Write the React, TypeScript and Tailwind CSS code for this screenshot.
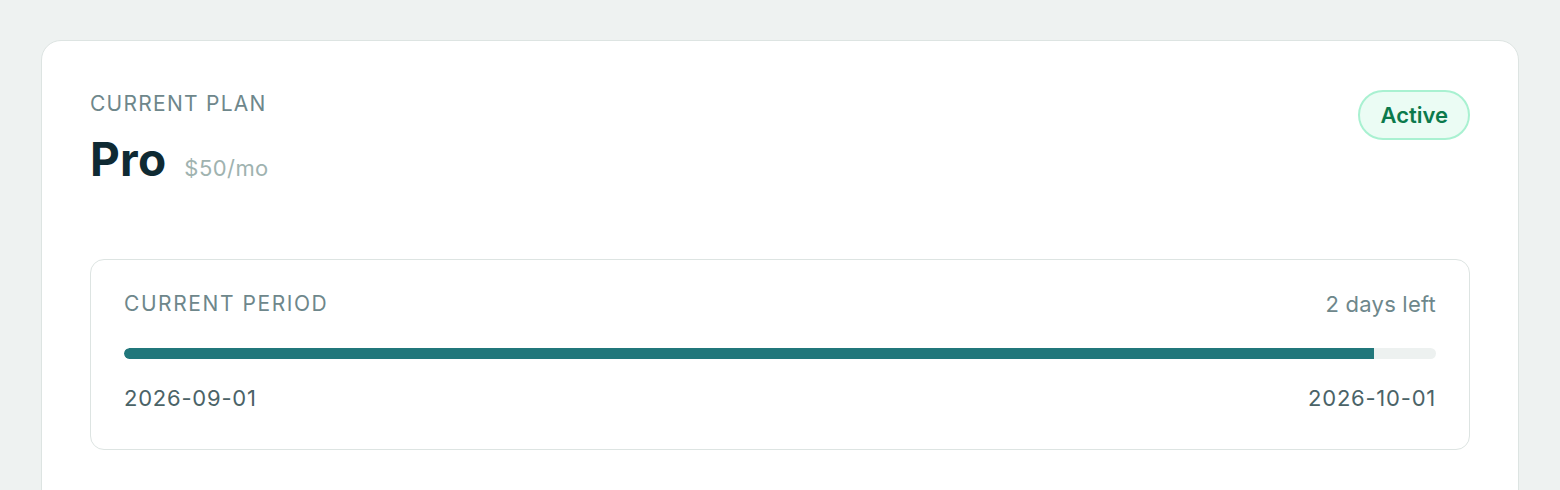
const FONT = "font-['Inter','Noto_Sans',sans-serif]"

function PeriodBox({ start, end, left, pct }: { start: string; end: string; left: string; pct: number }) {
  return (
    <div className="rounded-[14px] border border-[#dde4e2] px-[33px] pt-[31px] pb-[37px]">
      <div className="flex items-center justify-between">
        <span className="text-[21px] leading-[26px] tracking-[0.075em] text-[#6e878b]">CURRENT PERIOD</span>
        <span className="text-[22px] leading-[26px] tracking-[0.01em] text-[#6e878b]">{left}</span>
      </div>
      <div className="mt-[31px] h-[11px] w-full rounded-full bg-[#edf1f0] overflow-hidden">
        <div className="h-full rounded-l-full bg-[#21777b]" style={{ width: `${pct}%` }} />
      </div>
      <div className="mt-[25px] flex items-center justify-between text-[22px] leading-[28px] tracking-[0.035em] text-[#4b6367]">
        <span>{start}</span>
        <span>{end}</span>
      </div>
    </div>
  )
}

export default function App() {
  return (
    <div className={`${FONT} h-[490px] overflow-hidden bg-[#eef2f1] px-[41px] pt-[40px]`}>
      <div className="rounded-[20px] border border-[#dde4e2] bg-white px-12 pt-12 pb-24">
        <div className="flex items-start justify-between">
          <div>
            <div className="text-[21px] leading-[30px] tracking-[0.06em] text-[#6e878b]">CURRENT PLAN</div>
            <div className="mt-[16px] flex items-baseline gap-[18px]">
              <span className="text-[46px] leading-[48px] font-bold tracking-[0.005em] text-[#0f2a33]">Pro</span>
              <span className="text-[22px] tracking-[0.02em] text-[#9fb3b0]">$50/mo</span>
            </div>
          </div>
          <div className="mt-[1px] rounded-full border-2 border-[#a9f1d1] bg-[#ebfcf4] px-[20px] py-[9px] text-[22px] leading-[28px] font-semibold text-[#0b7a4c]">
            Active
          </div>
        </div>
        <div className="mt-[74px]">
          <PeriodBox start="2026-09-01" end="2026-10-01" left="2 days left" pct={95.3} />
        </div>
      </div>
    </div>
  )
}
